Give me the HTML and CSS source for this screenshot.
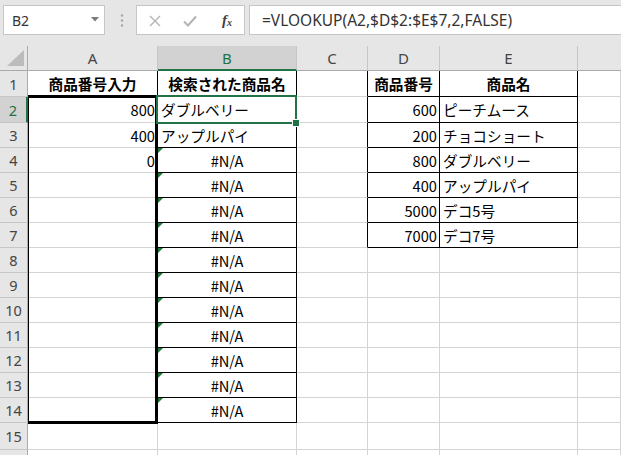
FILE: index.html
```html
<!DOCTYPE html>
<html lang="ja">
<head>
<meta charset="utf-8">
<title>VLOOKUP</title>
<link rel="stylesheet" href="styles.css">
</head>
<body>
<div class="app">
  <div class="toolbar">
    <div class="namebox">
      <span class="name">B2</span>
      <svg class="dd" width="8" height="5" viewBox="0 0 8 5"><path d="M0 0H8L4 4.5Z" fill="#7a7a7a"/></svg>
    </div>
    <svg class="dots" width="4" height="13" viewBox="0 0 4 13"><circle cx="2" cy="1.5" r="1.2" fill="#a6a6a6"/><circle cx="2" cy="6.5" r="1.2" fill="#a6a6a6"/><circle cx="2" cy="11.5" r="1.2" fill="#a6a6a6"/></svg>
    <div class="btns">
      <svg class="ic-x" width="12" height="12" viewBox="0 0 12 12"><path d="M1 1L11 11M11 1L1 11" stroke="#b3b3b3" stroke-width="1.4" fill="none"/></svg>
      <svg class="ic-ok" width="14" height="12" viewBox="0 0 14 12"><path d="M1 6.5L5 10.5L13 1.5" stroke="#b3b3b3" stroke-width="2" fill="none"/></svg>
      <span class="fx">f<sub>x</sub></span>
    </div>
    <div class="formula">=VLOOKUP(A2,$D$2:$E$7,2,FALSE)</div>
  </div>

  <div class="sheet">
    <div class="cells">
      <!-- header row -->
      <div class="corner"><span class="tri"></span></div>
      <div class="ch">A</div>
      <div class="ch on">B</div>
      <div class="ch">C</div>
      <div class="ch">D</div>
      <div class="ch">E</div>
      <div class="ch last"></div>

      <!-- row 1 -->
      <div class="rh">1</div>
      <div class="c b br bb">商品番号入力</div>
      <div class="c b br bb">検索された商品名</div>
      <div class="c br"></div>
      <div class="c b br bb">商品番号</div>
      <div class="c b br bb">商品名</div>
      <div class="c"></div>

      <!-- row 2 -->
      <div class="rh on">2</div>
      <div class="c r br">800</div>
      <div class="c br bb">ダブルベリー</div>
      <div class="c br"></div>
      <div class="c r br bb">600</div>
      <div class="c br bb">ピーチムース</div>
      <div class="c"></div>

      <!-- row 3 -->
      <div class="rh">3</div>
      <div class="c r br">400</div>
      <div class="c br bb">アップルパイ</div>
      <div class="c br"></div>
      <div class="c r br bb">200</div>
      <div class="c br bb">チョコショート</div>
      <div class="c"></div>

      <!-- row 4 -->
      <div class="rh">4</div>
      <div class="c r br">0</div>
      <div class="c m br bb err">#N/A</div>
      <div class="c br"></div>
      <div class="c r br bb">800</div>
      <div class="c br bb">ダブルベリー</div>
      <div class="c"></div>

      <!-- row 5 -->
      <div class="rh">5</div>
      <div class="c br"></div>
      <div class="c m br bb err">#N/A</div>
      <div class="c br"></div>
      <div class="c r br bb">400</div>
      <div class="c br bb">アップルパイ</div>
      <div class="c"></div>

      <!-- row 6 -->
      <div class="rh">6</div>
      <div class="c br"></div>
      <div class="c m br bb err">#N/A</div>
      <div class="c br"></div>
      <div class="c r br bb">5000</div>
      <div class="c br bb">デコ5号</div>
      <div class="c"></div>

      <!-- row 7 -->
      <div class="rh">7</div>
      <div class="c br"></div>
      <div class="c m br bb err">#N/A</div>
      <div class="c br"></div>
      <div class="c r br bb">7000</div>
      <div class="c br bb">デコ7号</div>
      <div class="c"></div>

      <!-- row 8 -->
      <div class="rh">8</div>
      <div class="c br"></div>
      <div class="c m br bb err">#N/A</div>
      <div class="c"></div><div class="c"></div><div class="c"></div><div class="c"></div>

      <!-- row 9 -->
      <div class="rh">9</div>
      <div class="c br"></div>
      <div class="c m br bb err">#N/A</div>
      <div class="c"></div><div class="c"></div><div class="c"></div><div class="c"></div>

      <!-- row 10 -->
      <div class="rh">10</div>
      <div class="c br"></div>
      <div class="c m br bb err">#N/A</div>
      <div class="c"></div><div class="c"></div><div class="c"></div><div class="c"></div>

      <!-- row 11 -->
      <div class="rh">11</div>
      <div class="c br"></div>
      <div class="c m br bb err">#N/A</div>
      <div class="c"></div><div class="c"></div><div class="c"></div><div class="c"></div>

      <!-- row 12 -->
      <div class="rh">12</div>
      <div class="c br"></div>
      <div class="c m br bb err">#N/A</div>
      <div class="c"></div><div class="c"></div><div class="c"></div><div class="c"></div>

      <!-- row 13 -->
      <div class="rh">13</div>
      <div class="c br"></div>
      <div class="c m br bb err">#N/A</div>
      <div class="c"></div><div class="c"></div><div class="c"></div><div class="c"></div>

      <!-- row 14 -->
      <div class="rh">14</div>
      <div class="c br"></div>
      <div class="c m br bb err">#N/A</div>
      <div class="c"></div><div class="c"></div><div class="c"></div><div class="c"></div>

      <!-- row 15 -->
      <div class="rh">15</div>
      <div class="c"></div><div class="c"></div><div class="c"></div><div class="c"></div><div class="c"></div><div class="c"></div>

      <!-- row 16 (only its top edge is visible) -->
      <div class="rh"></div>
      <div class="c"></div><div class="c"></div><div class="c"></div><div class="c"></div><div class="c"></div><div class="c"></div>
    </div>

    <!-- selection marks layered on the same grid -->
    <div class="marks">
      <div class="thick"></div>
      <div class="active"><span class="handle"></span></div>
    </div>
  </div>
</div>
</body>
</html>
```

FILE: styles.css
```css
html, body {
  margin: 0;
  padding: 0;
  background: #ffffff;
}

body {
  width: 621px;
  height: 455px;
  overflow: hidden;
  font-family: "Noto Sans CJK JP", "Noto Sans", sans-serif;
}

.app {
  width: 621px;
  height: 455px;
  overflow: hidden;
  display: flex;
  flex-direction: column;
}

/* ---------- toolbar / formula bar ---------- */
.toolbar {
  height: 46px;
  flex: none;
  background: #e6e6e6;
  display: flex;
  align-items: flex-start;
  padding: 5px 0 0 3px;
  box-sizing: border-box;
}

.namebox {
  width: 102px;
  height: 30px;
  box-sizing: border-box;
  background: #fff;
  border: 1px solid #c6c6c6;
  display: flex;
  align-items: center;
  justify-content: space-between;
  padding: 0 5px 0 8px;
}

.name {
  font-family: "Noto Sans", sans-serif;
  font-size: 14px;
  color: #333;
}

.dd {
  margin-top: -2px;
}

.dots {
  margin: 9px 0 0 15px;
}

.btns {
  width: 109px;
  height: 30px;
  box-sizing: border-box;
  margin-left: 12px;
  background: #fff;
  border: 1px solid #c6c6c6;
  display: flex;
  align-items: center;
  padding-left: 12px;
}

.ic-x {
  margin-top: 1px;
}

.ic-ok {
  margin-left: 22px;
  margin-top: 1px;
}

.fx {
  margin-left: 25px;
  font-family: "Liberation Serif", serif;
  font-style: italic;
  font-weight: bold;
  font-size: 15px;
  color: #404040;
  line-height: 1;
}

.fx sub {
  font-size: 10px;
  vertical-align: -1px;
}

.formula {
  flex: 1;
  height: 30px;
  box-sizing: border-box;
  margin-left: 4px;
  margin-right: -4px;
  background: #fff;
  border: 1px solid #c6c6c6;
  display: flex;
  align-items: center;
  padding-left: 12px;
  font-family: "Noto Sans", sans-serif;
  font-size: 15.5px;
  color: #333;
  white-space: nowrap;
}

/* ---------- sheet ---------- */
.sheet {
  flex: none;
  display: grid;
  grid-template-columns: 1fr;
  grid-template-rows: auto;
}

.cells,
.marks {
  grid-area: 1 / 1;
  display: grid;
  grid-template-columns: 28px 130px 139px 71px 72px 138px 1fr;
  grid-template-rows: 25px 26px 26px repeat(12, 25px) 27px 25px;
}

.marks {
  pointer-events: none;
  z-index: 1;
}

.corner {
  background: #e6e6e6;
  border-right: 1px solid #ababab;
  border-bottom: 1px solid #ababab;
  box-sizing: border-box;
  display: flex;
  align-items: flex-end;
  justify-content: flex-end;
  padding: 0 3px 4px 0;
}

.tri {
  width: 0;
  height: 0;
  border-left: 17px solid transparent;
  border-bottom: 16px solid #bcbcbc;
}

.ch {
  background: #e6e6e6;
  border-right: 1px solid #c6c6c6;
  border-bottom: 1px solid #ababab;
  box-sizing: border-box;
  display: flex;
  align-items: center;
  justify-content: center;
  font-family: "Noto Sans", sans-serif;
  font-size: 15px;
  color: #444;
}

.ch.last {
  border-right: none;
}

.ch.on {
  background: #d2d2d2;
  color: #217346;
  border-bottom: 2px solid #217346;
  padding-top: 1px;
}

.rh {
  background: #e6e6e6;
  border-right: 1px solid #ababab;
  border-bottom: 1px solid #c6c6c6;
  box-sizing: border-box;
  display: flex;
  align-items: center;
  justify-content: center;
  font-family: "Noto Sans", sans-serif;
  font-size: 14.5px;
  color: #444;
}

.rh.on {
  background: #d2d2d2;
  color: #217346;
  border-right: 2px solid #217346;
}

.c {
  position: relative;
  border-right: 1px solid #d4d4d4;
  border-bottom: 1px solid #d4d4d4;
  box-sizing: border-box;
  display: flex;
  align-items: center;
  padding: 0 3px;
  font-size: 14.67px;
  color: #000;
  white-space: nowrap;
  overflow: hidden;
}

.c.r {
  justify-content: flex-end;
  padding-right: 2px;
}

.c.m {
  justify-content: center;
}

.c.b {
  justify-content: center;
  font-weight: bold;
}

.c.br {
  border-right-color: #000;
}

.c.bb {
  border-bottom-color: #000;
}

.c.err::before {
  content: "";
  position: absolute;
  left: 0;
  top: 0;
  width: 0;
  height: 0;
  border-top: 5px solid #1e7b3a;
  border-right: 5px solid transparent;
}

/* thick outline around A2:A14 */
.thick {
  grid-column: 2;
  grid-row: 3 / 16;
  margin: -2px 0 -1px 0;
  border-style: solid;
  border-color: #000;
  border-width: 3px 3px 3px 1px;
}

/* active cell B2 */
.active {
  grid-column: 3;
  grid-row: 3;
  margin: -2px 0 -1px -2px;
  border: 2px solid #217346;
  position: relative;
}

.handle {
  position: absolute;
  right: -5px;
  bottom: -5px;
  width: 6px;
  height: 6px;
  background: #217346;
  border: 1px solid #fff;
}
```
